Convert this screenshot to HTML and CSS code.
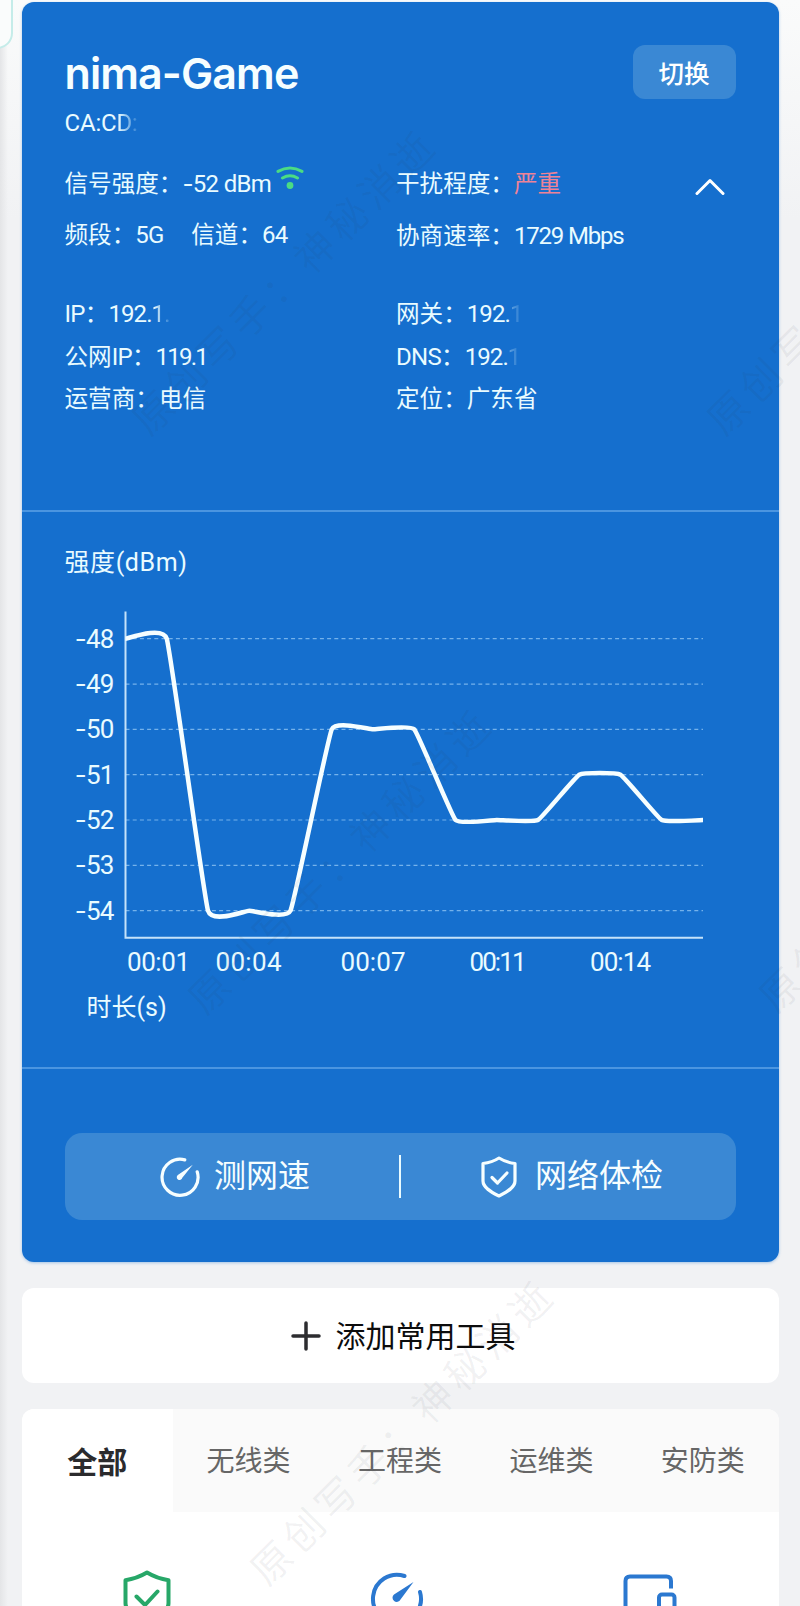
FILE: index.html
```html
<!doctype html>
<html lang="zh-CN">
<head>
  <meta charset="utf-8" />
  <meta name="viewport" content="width=device-width,initial-scale=1" />
  <title>网络工具</title>
  <link rel="stylesheet" href="styles.css">
</head>
<body>

  <div class="edge-frame"></div>

  <div class="page">

    <section class="wifi-card">
      <div class="wifi-info">
        <div class="wifi-head">
          <div>
            <h1>nima-Game</h1>
            <div class="mac"><span>CA:C</span><span class="fade">D:</span></div>
          </div>
          <button class="switch-btn">切换</button>
        </div>

        <div class="signal">
          <div class="pair"><span class="label">信号强度：</span><span class="value"><i class="dash">-</i>52 dBm</span>
            <svg class="wifi-icon" width="28" height="24" viewBox="0 0 28 24">
              <path d="M2 5.4Q14 -1.4 26 5.4M6.500 12Q14 7.600 21.500 12" />
              <circle cx="14" cy="19.500" r="3.400" />
            </svg>
          </div>
          <div class="pair up"><span class="label">干扰程度：</span><span class="bad">严重</span></div>
          <div class="pair band-row"><span class="label">频段：</span><span class="value band">5G</span><span class="label">信道：</span><span class="value">64</span></div>
          <div class="pair"><span class="label">协商速率：</span><span class="value rate">1729 Mbps</span></div>
          <svg class="chevron" width="30" height="18" viewBox="0 0 30 18"><path d="M2 15.500L15 2.500L28 15.500" /></svg>
        </div>

        <div class="address">
          <div class="pair"><span class="value">IP</span><span class="label">：</span><span class="value num">192.</span><span class="value fade">1.</span></div>
          <div class="pair"><span class="label">网关：</span><span class="value num">192.</span><span class="value fade faint">1</span></div>
          <div class="pair"><span class="label">公网</span><span class="value">IP</span><span class="label">：</span><span class="value ip">119.1</span></div>
          <div class="pair"><span class="value dns">DNS</span><span class="label">：</span><span class="value num">192.</span><span class="value fade faint">1</span></div>
          <div class="pair"><span class="label">运营商：</span><span class="label">电信</span></div>
          <div class="pair"><span class="label">定位：</span><span class="label">广东省</span></div>
        </div>
      </div>

      <div class="chart-box">
        <div class="chart-title">强度(dBm)</div>
        <svg class="chart" id="chart" width="670" height="380" viewBox="65 600 670 380">
          <g id="grid"></g>
          <path class="axis" d="M125.500 611.500V937.700H703" />
          <path class="line" id="line" d="" />
          <g id="xLabels"></g>
        </svg>
        <div class="chart-unit">时长(s)</div>
      </div>

      <div class="quick">
        <div class="quick-bar">
          <div class="quick-item">
            <svg class="gauge" width="40" height="40" viewBox="0 0 40 40">
              <path d="M24.800 2.900A18 18 0 1 0 37.200 14.800" />
              <path class="needle" d="M32.800 7.700L22.300 20.800A2.800 2.800 0 1 1 18.200 17.800Z" />
            </svg>
            <span>测网速</span>
          </div>
          <div class="quick-line"></div>
          <div class="quick-item check">
            <svg class="shield" width="36" height="42" viewBox="0 0 36 42">
              <path d="M18 2Q25 6.500 34 7.500V25C34 31.500 26 36 18 40C10 36 2 31.500 2 25V7.500Q11 6.500 18 2Z" />
              <path d="M11 21.500L16.500 27L26 17" />
            </svg>
            <span>网络体检</span>
          </div>
        </div>
      </div>
    </section>

    <section class="add-card">
      <svg class="plus" width="30" height="30" viewBox="0 0 30 30"><path d="M15 2V28M2 15H28" /></svg>
      <span>添加常用工具</span>
    </section>

    <section class="tools-card">
      <div class="tabs">
        <div class="tab active">全部</div>
        <div class="tab">无线类</div>
        <div class="tab">工程类</div>
        <div class="tab">运维类</div>
        <div class="tab">安防类</div>
      </div>
      <div class="tools">
        <div class="tool">
          <svg class="green" width="52" height="58" viewBox="0 0 52 58">
            <path d="M25 3.500Q35 9.500 46.500 11.200V34C46.500 43 36 49 25 54C14 49 3.500 43 3.500 34V11.200Q15 9.500 25 3.500Z" />
            <path d="M14.500 27.500L23 36L35.500 22.500" />
          </svg>
        </div>
        <div class="tool">
          <svg class="blue gauge-big" width="56" height="56" viewBox="0 0 56 56">
            <path d="M34.500 5A24 24 0 1 0 50 21" />
            <path class="needle" d="M43.500 11L30.500 28.500A4.200 4.200 0 1 1 24 23.500Z" />
          </svg>
        </div>
        <div class="tool">
          <svg class="blue" width="56" height="56" viewBox="0 0 56 56">
            <path class="screen" d="M48 19.500V12Q48 7.500 43.500 7.500H7Q2.500 7.500 2.500 12V48H28" />
            <rect x="36" y="25.500" width="15.500" height="26" rx="3" />
          </svg>
        </div>
      </div>
    </section>

  </div>

  <div class="marks">
    <span class="mark m1">原创写手：神秘消逝</span>
    <span class="mark m2">原创写手：神秘消逝</span>
    <span class="mark m3">原创写手：神秘消逝</span>
    <span class="mark m4">原创写手：神秘消逝</span>
    <span class="mark m5">原创写手：神秘消逝</span>
  </div>

<script>
  const data = [-48, -48, -54, -54, -54, -50, -50, -50, -52, -52, -52, -51, -51, -52, -52];
  const times = [["00:01", 127, 63], ["00:04", 215.5, 66], ["00:07", 340.5, 65], ["00:11", 469.5, 57], ["00:14", 590, 61]];
  const left = 125.5, right = 703, top48 = 638.7, rowH = 45.33;
  const smooth = 0.05;

  const pts = data.map((v, i) => [
    left + i * (right - left) / (data.length - 1),
    top48 + (-48 - v) * rowH
  ]);

  // bezier through the points
  let d = `M${pts[0][0]} ${pts[0][1]}`;
  for (let i = 1; i < pts.length; i++) {
    const pp = pts[Math.max(i - 2, 0)], p = pts[i - 1], c = pts[i], n = pts[Math.min(i + 1, pts.length - 1)];
    d += `C${p[0] + (c[0] - pp[0]) * smooth} ${p[1] + (c[1] - pp[1]) * smooth} ` +
         `${c[0] - (n[0] - p[0]) * smooth} ${c[1] - (n[1] - p[1]) * smooth} ${c[0]} ${c[1]}`;
  }
  document.getElementById("line").setAttribute("d", d);

  let grid = "";
  for (let v = 48; v <= 54; v++) {
    const y = top48 + (v - 48) * rowH;
    grid += `<path class="grid-line" d="M${left} ${y}H${right}"/>`;
    grid += `<text class="tick" x="113.5" y="${y + 9}"><tspan class="dash">-</tspan>${v}</text>`;
  }
  document.getElementById("grid").innerHTML = grid;

  document.getElementById("xLabels").innerHTML = times.map(([t, x, w]) =>
    `<text class="time" x="${x}" y="971" textLength="${w}">${t}</text>`).join("");
</script>

</body>
</html>
```

FILE: styles.css
```css
:root{
  --blue:#156fce;
  --panel:#3a88d4;
  --rule:#4b95e0;
  --text:#e9fbff;
  --page:#f1f2f4;
  font-family: Roboto, "Noto Sans CJK SC", sans-serif;
}
*{ box-sizing:border-box; }

body{
  margin:0;
  position:relative;
  height:1606px;
  overflow:hidden;
  background:
    linear-gradient(to right, #e4e5e7 0, rgba(241,242,244,0) 8px),
    linear-gradient(#fafbfb 0, var(--page) 220px);
}

/* corner of the frame behind the cards */
.edge-frame{
  position:absolute;
  left:-30px;
  top:-40px;
  width:43px;
  height:89px;
  border:2px solid #c5ece9;
  border-radius:0 0 16px 0;
  background:#fafcfc;
}

.page{
  position:relative;
  padding:2px 21.500px 0 21.500px;
}

.wifi-card{
  height:1260px;
  border-radius:12px;
  background:var(--blue);
  color:var(--text);
  box-shadow:0 1px 3px rgba(21,111,206,0.35);
}

.wifi-info{
  height:508px;
  padding:43px 43px 0 43px;
}
.wifi-head{
  display:flex;
  justify-content:space-between;
  height:113px;
}
h1{
  margin:6px 0 0 0;
  font-family:Inter, sans-serif;
  font-size:43px;
  line-height:44px;
  font-weight:600;
  letter-spacing:-0.9px;
  color:#f6feff;
}
.mac{
  margin-top:12px;
  font-size:24px;
  line-height:32px;
  letter-spacing:-0.2px;
}
.switch-btn{
  width:103px;
  height:54px;
  padding:0 0 1px 0;
  border:0;
  border-radius:12px;
  background:var(--panel);
  color:#fff;
  font-family:inherit;
  font-size:25.500px;
  font-weight:500;
}

.fade{
  -webkit-mask-image:linear-gradient(to right, #000 10%, rgba(0,0,0,0.2) 90%);
  mask-image:linear-gradient(to right, #000 10%, rgba(0,0,0,0.2) 90%);
}
.faint{ opacity:0.35; }

.signal{
  position:relative;
  display:grid;
  grid-template-columns:331.500px 1fr;
  grid-template-rows:52px 52px;
}
.address{
  display:grid;
  grid-template-columns:331.500px 1fr;
  grid-auto-rows:42.500px;
  margin-top:31px;
}
.pair{
  display:flex;
  align-items:center;
  font-size:23.600px;
  line-height:32px;
  white-space:nowrap;
}
.up{ padding-bottom:1px; }
.band-row{ padding-bottom:3px; }
.value{ letter-spacing:-0.7px; font-size:24px; }
.num{ letter-spacing:-0.9px; }
.rate{ letter-spacing:-1.2px; }
.band{ width:56px; }
.ip{ letter-spacing:-1.8px; }
.dns{ letter-spacing:-0.7px; }
.bad{ color:#ee8397; }
.dash{ font-family:Inter, sans-serif; font-style:normal; }

.wifi-icon{
  margin:-12px 0 0 5px;
  fill:none;
  stroke:#4bdc83;
  stroke-width:3;
  stroke-linecap:round;
}
.wifi-icon circle{ fill:#4bdc83; stroke:none; }
.chevron{
  position:absolute;
  right:11px;
  top:20px;
  fill:none;
  stroke:#fff;
  stroke-width:3;
  stroke-linecap:round;
  stroke-linejoin:round;
}

/* chart */
.chart-box{
  height:559px;
  padding:34px 43px 0 43px;
  border-top:2px solid var(--rule);
  border-bottom:2px solid var(--rule);
}
.chart-title, .chart-unit{
  font-size:25px;
  line-height:34px;
}
.chart-title{ margin-bottom:20px; letter-spacing:0.6px; }
.chart-unit{ margin:11px 0 0 22px; }
.chart{ display:block; }
.grid-line{
  stroke:#75b2eb;
  stroke-width:1.2;
  stroke-dasharray:4 3.2;
}
.axis{
  fill:none;
  stroke:#c4e2fa;
  stroke-width:2;
}
.line{
  fill:none;
  stroke:#f6feff;
  stroke-width:4.500;
  stroke-linejoin:round;
}
.tick, .time{
  fill:var(--text);
  font-size:26px;
}
.tick{ text-anchor:end; letter-spacing:-0.8px; }

/* speed test / check-up */
.quick{ padding:64px 43px 0 43px; }
.quick-bar{
  display:flex;
  align-items:center;
  height:87px;
  border-radius:17px;
  background:var(--panel);
  color:#f6feff;
}
.quick-item{
  width:334px;
  display:flex;
  align-items:center;
  justify-content:center;
  gap:14px;
  padding-left:7px;
  font-size:32px;
  line-height:40px;
}
.quick-item span{ margin-top:-2px; }
.check{ gap:18px; padding-left:8px; }
.quick-line{
  width:2.500px;
  height:43px;
  background:#e9fbff;
}
.gauge, .shield{
  fill:none;
  stroke:#f6feff;
  stroke-width:3.200;
  stroke-linecap:round;
  stroke-linejoin:round;
}
.gauge .needle{ fill:#f6feff; stroke:none; }

.add-card{
  display:flex;
  align-items:center;
  justify-content:center;
  gap:15px;
  height:95px;
  margin-top:26px;
  padding-left:6px;
  border-radius:12px;
  background:#fff;
  color:#0c0c0c;
  font-size:30px;
}
.add-card span{ margin-top:-4px; }
.plus{
  fill:none;
  stroke:#2d2d30;
  stroke-width:3.500;
  stroke-linecap:round;
}

.tools-card{
  height:230px;
  margin-top:26px;
  border-radius:12px;
  background:#fff;
  overflow:hidden;
}
.tabs{
  display:grid;
  grid-template-columns:repeat(5, 1fr);
  height:103px;
  background:#fafafa;
}
.tab{
  display:flex;
  align-items:center;
  justify-content:center;
  padding-bottom:3px;
  font-size:28px;
  color:#666;
}
.tab.active{
  padding-bottom:2px;
  background:#fff;
  color:#2b2b2d;
  font-size:30px;
  font-weight:700;
}
.tools{
  display:grid;
  grid-template-columns:repeat(3, 1fr);
  padding-top:57px;
}
.tool{ display:flex; justify-content:center; }
.tool svg{
  fill:none;
  stroke-width:4;
  stroke-linecap:round;
  stroke-linejoin:round;
}
.green{ stroke:#27a768; }
.blue{ stroke:#2b78d0; margin-left:-3px; }
.gauge-big{ margin-top:2px; }
.blue .needle{ fill:#2b78d0; stroke:none; }
.blue .screen{ stroke-linecap:butt; }

/* watermark over everything */
.marks{
  position:absolute;
  inset:0;
  overflow:hidden;
  pointer-events:none;
}
.mark{
  position:absolute;
  width:420px;
  height:50px;
  text-align:center;
  font-size:40px;
  line-height:50px;
  letter-spacing:5.700px;
  white-space:nowrap;
  color:rgba(50,60,75,0.065);
  transform:translate(-50%,-50%) rotate(-45deg);
}
.m1{ left:286px; top:283px; }
.m2{ left:342px; top:862px; }
.m3{ left:404px; top:1433px; }
.m4{ left:861px; top:283px; }
.m5{ left:913px; top:860px; }
```
